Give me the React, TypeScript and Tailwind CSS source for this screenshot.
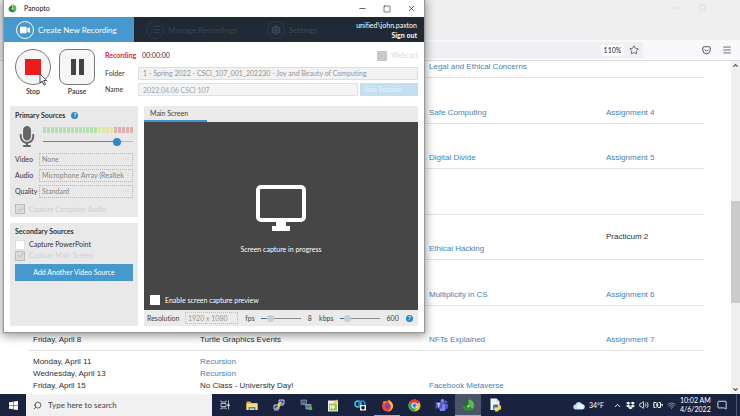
import { useState, type ReactNode } from 'react';
import {
  BatteryCharging,
  Check,
  ChevronDown,
  ChevronUp,
  List,
  Menu,
  MessageSquare,
  Minus,
  Search,
  Settings,
  Square,
  Star,
  Volume2,
  Wifi,
  X,
} from 'lucide-react';
import { FaDropbox, FaMicrophone, FaVideo } from 'react-icons/fa';

type Cell = { text: string; link?: boolean };

type ScheduleRow = {
  dates: Cell[];
  topics: Cell[];
  reading: Cell[];
  work: Cell[];
  height: string;
};

const link = (text: string): Cell => ({ text, link: true });
const plain = (text: string): Cell => ({ text });

const schedule: ScheduleRow[] = [
  { dates: [], topics: [], reading: [link('Legal and Ethical Concerns')], work: [], height: 'h-4' },
  { dates: [], topics: [], reading: [link('Safe Computing')], work: [link('Assignment 4')], height: 'h-[46px]' },
  { dates: [], topics: [], reading: [link('Digital Divide')], work: [link('Assignment 5')], height: 'h-[45px]' },
  { dates: [], topics: [], reading: [], work: [], height: 'h-[46px]' },
  { dates: [], topics: [], reading: [link('Ethical Hacking')], work: [plain('Practicum 2'), plain('\u00a0')], height: 'h-[45px]' },
  { dates: [], topics: [], reading: [link('Multiplicity in CS')], work: [link('Assignment 6')], height: 'h-[46px]' },
  {
    dates: [plain('Friday, April 8')],
    topics: [plain('Turtle Graphics Events')],
    reading: [link('NFTs Explained')],
    work: [link('Assignment 7')],
    height: 'h-[45px]',
  },
  {
    dates: [plain('Monday, April 11'), plain('Wednesday, April 13'), plain('Friday, April 15')],
    topics: [link('Recursion'), link('Recursion'), plain('No Class - University Day!')],
    reading: [link('Facebook Metaverse')],
    work: [],
    height: 'h-[46px]',
  },
];

function ScheduleCell({ items }: { items: Cell[] }) {
  return (
    <td className="px-[5px] pb-1 align-bottom">
      {items.map((item, i) => (
        <div key={i}>
          {item.link ? (
            <a href="#" className="text-[#4583b8]">
              {item.text}
            </a>
          ) : (
            item.text
          )}
        </div>
      ))}
    </td>
  );
}

function Browser() {
  return (
    <div className="flex min-h-0 flex-1 flex-col bg-white">
      <div className="flex h-10 items-start justify-end gap-[18px] bg-[#efeff0] px-2 pt-1 text-[#cfcfcf]">
        <button type="button" aria-label="Minimize browser"><Minus size={8} strokeWidth={1.5} /></button>
        <button type="button" aria-label="Restore browser"><Square size={7} strokeWidth={1.5} /></button>
        <button type="button" aria-label="Close browser"><X size={8} strokeWidth={1.5} className="text-[#e4e4e4]" /></button>
      </div>

      <div className="flex h-[21px] items-center border-b border-[#dcdce0] bg-[#f9f9fb] pr-2">
        <div className="flex h-4 flex-1 items-center justify-end gap-[5px] bg-[#f0f0f4] pr-1">
          <span className="flex h-[11px] w-[23px] items-center justify-center rounded-xs bg-white font-['Lato',sans-serif] text-[7px] text-[#222]">
            110%
          </span>
          <button type="button" aria-label="Bookmark this page">
            <Star size={10} strokeWidth={2} className="text-[#555]" />
          </button>
        </div>
        <div className="flex w-[89px] justify-end gap-[11px] text-[#555]">
          <button type="button" aria-label="Pocket">
            <svg width="9" height="9" viewBox="0 0 18 18" fill="none" stroke="currentColor" strokeWidth="2">
              <path d="M1.5 3.5a2 2 0 0 1 2-2h11a2 2 0 0 1 2 2V8a7.5 7.5 0 0 1-15 0z" />
              <path d="M5.5 7 9 10.5 12.5 7" />
            </svg>
          </button>
          <button type="button" aria-label="Open menu"><Menu size={10} strokeWidth={2} /></button>
        </div>
      </div>

      <div className="flex min-h-0 flex-1">
        <div className="min-w-0 flex-1 overflow-hidden pr-[27px] pl-7">
          <table className="w-full table-fixed border-collapse text-[8px] leading-3 text-[#2f2f2f]">
            <colgroup>
              <col className="w-[167px]" />
              <col className="w-[229px]" />
              <col className="w-[177px]" />
              <col />
            </colgroup>
            <tbody>
              {schedule.map((row, i) => (
                <tr key={i} className={`border-b border-[#e2e2e2] ${row.height}`}>
                  <ScheduleCell items={row.dates} />
                  <ScheduleCell items={row.topics} />
                  <ScheduleCell items={row.reading} />
                  <ScheduleCell items={row.work} />
                </tr>
              ))}
            </tbody>
          </table>
        </div>
        <div className="flex w-[9px] flex-col items-center bg-[#f0f0f0] py-px text-[#444]">
          <ChevronUp size={7} strokeWidth={3.5} />
          <div className="flex w-full flex-1 flex-col">
            <div className="flex-[131]" />
            <div className="flex-[102] bg-[#cbcbcb]" />
            <div className="flex-[82]" />
          </div>
          <ChevronDown size={7} strokeWidth={3.5} />
        </div>
      </div>
    </div>
  );
}

function PanoptoLogo({ size }: { size: number }) {
  return (
    <svg width={size} height={size} viewBox="0 0 24 24">
      <path d="M1 12c0 7 7 12 15 9l5-3-9-5z" fill="#2c8f3d" />
      <path d="M12 1c9 0 13 9 9 16l-2 1-7-6z" fill="#57b947" />
      <path d="M11 1 1 11l9 3z" fill="#1f6e33" />
      <path d="M9 12h5l-2 4z" fill="#d7efd2" />
    </svg>
  );
}

function HelpDot() {
  return (
    <button
      type="button"
      aria-label="Help"
      className="flex size-[7px] items-center justify-center rounded-full bg-[#2f86c1] text-[6px] leading-none font-bold text-white"
    >
      ?
    </button>
  );
}

function TitleBar() {
  return (
    <div className="flex h-[17px] items-center bg-white pr-2 pl-1">
      <PanoptoLogo size={9} />
      <span className="ml-[7px] flex-1 text-[7px] text-[#111]">Panopto</span>
      <div className="flex items-center gap-4 text-[#333]">
        <button type="button" aria-label="Minimize"><Minus size={9} strokeWidth={2} /></button>
        <button type="button" aria-label="Maximize"><Square size={8} strokeWidth={2} /></button>
        <button type="button" aria-label="Close"><X size={9} strokeWidth={2} /></button>
      </div>
    </div>
  );
}

function NavBar() {
  return (
    <nav className="flex h-[25px] bg-[#202a35] text-[8px] whitespace-nowrap">
      <button type="button" className="flex w-[130px] items-center gap-1 bg-[#4798cd] pl-3 text-white">
        <span className="flex size-[18px] shrink-0 items-center justify-center rounded-full border border-white">
          <FaVideo size={10} />
        </span>
        Create New Recording
      </button>
      <button type="button" disabled className="flex w-[121px] items-center gap-1 pl-3 text-[#3a444f]">
        <span className="flex size-[18px] shrink-0 items-center justify-center rounded-full border border-[#2e3843]">
          <List size={11} />
        </span>
        Manage Recordings
      </button>
      <button type="button" disabled className="flex items-center gap-1 pl-3 text-[#3f4954]">
        <span className="flex size-[18px] shrink-0 items-center justify-center rounded-full border border-[#2e3843]">
          <Settings size={10} strokeWidth={3.5} />
        </span>
        Settings
      </button>
      <div className="ml-auto flex flex-col items-end justify-center pr-[7px] text-[7px] leading-[10px] text-white">
        <span>unified\john.paxton</span>
        <a href="#" className="font-bold">Sign out</a>
      </div>
    </nav>
  );
}

function RecordingHeader() {
  return (
    <div className="flex gap-2 text-[7px] text-[#333]">
      <button type="button" className="flex w-9 flex-col items-center font-semibold">
        <span className="flex size-9 items-center justify-center rounded-full border border-[#777] bg-[#f6f6f6]">
          <span className="size-4 bg-[#ef1c1c]" />
        </span>
        <span className="mt-px leading-[10px]">Stop</span>
      </button>
      <button type="button" className="flex w-9 flex-col items-center font-semibold">
        <span className="flex size-9 items-center justify-center gap-[3px] rounded-lg border border-[#777] bg-[#f6f6f6]">
          <span className="h-4 w-[5px] bg-[#444]" />
          <span className="h-4 w-[5px] bg-[#444]" />
        </span>
        <span className="mt-px leading-[10px]">Pause</span>
      </button>

      <div className="flex flex-1 flex-col gap-[3px] pl-[2px]">
        <div className="flex h-[13px] items-center">
          <span className="w-[37px] font-bold text-[#e0243a]">Recording</span>
          <span>00:00:00</span>
          <label className="ml-auto flex items-center gap-1 text-[#d8d8d8]">
            <input type="checkbox" disabled className="size-[10px] appearance-none bg-[#c8c8c8]" />
            Webcast
          </label>
        </div>
        <div className="mt-[2px] flex items-center">
          <label htmlFor="folder" className="w-[33px]">Folder</label>
          <select
            id="folder"
            disabled
            className="h-[13px] min-w-0 flex-1 appearance-none border border-[#dedede] bg-[#f2f2f2] pl-1 text-[#959595]"
          >
            <option>1 - Spring 2022 - CSCI_107_001_202230 - Joy and Beauty of Computing</option>
          </select>
        </div>
        <div className="flex items-center">
          <label htmlFor="name" className="w-[33px]">Name</label>
          <input
            id="name"
            disabled
            defaultValue="2022.04.06 CSCI 107"
            className="h-[13px] min-w-0 flex-1 border border-[#e2e2e2] bg-[#f4f4f4] pl-1 text-[#a3a3a3]"
          />
          <button type="button" disabled className="ml-[2px] h-[13px] w-[58px] bg-[#c3dff0] pr-3 text-[#e9f4fb]">
            Join Session
          </button>
        </div>
      </div>
    </div>
  );
}

// 23 bars: green, then yellow, then the red end of the scale
const levelBars = Array.from({ length: 23 }, (_, i) =>
  i < 14 ? 'bg-[#b3deae]' : i < 18 ? 'bg-[#dfe6b0]' : 'bg-[#dfb0b0]'
);

function SourceSelect({ id, label, value }: { id: string; label: string; value: string }) {
  return (
    <div className="flex items-center">
      <label htmlFor={id} className="w-6 shrink-0">{label}</label>
      <div className="grid min-w-0 flex-1 items-center">
        <select
          id={id}
          disabled
          className="col-start-1 row-start-1 h-[13px] w-full appearance-none border border-dotted border-[#b5b5b5] pl-[2px] text-[#858585]"
        >
          <option>{value}</option>
        </select>
        <ChevronDown size={5} className="col-start-1 row-start-1 mr-[3px] justify-self-end text-[#bdbdbd]" />
      </div>
    </div>
  );
}

function PrimarySources() {
  const [volume, setVolume] = useState(85);

  return (
    <section className="flex h-[111px] flex-col bg-[#e9e9e9] px-[5px] pt-1 text-[7px] text-[#333]">
      <h2 className="flex h-[10px] items-center gap-[6px] font-bold">
        Primary Sources
        <HelpDot />
      </h2>
      <div className="mt-1 flex h-6 items-center gap-1">
        <FaMicrophone size={21} className="w-6 text-[#666]" />
        <div className="flex flex-1 flex-col gap-[5px]">
          <div className="flex h-[6px] gap-px">
            {levelBars.map((color, i) => (
              <span key={i} className={`flex-1 ${color}`} />
            ))}
          </div>
          <input
            type="range"
            aria-label="Microphone volume"
            value={volume}
            onChange={(e) => setVolume(Number(e.target.value))}
            className="h-2 w-full appearance-none bg-[linear-gradient(to_right,#3d8fc6_82%,#bdbdbd_82%)] bg-[length:100%_1px] bg-center bg-no-repeat [&::-webkit-slider-thumb]:size-2 [&::-webkit-slider-thumb]:appearance-none [&::-webkit-slider-thumb]:rounded-full [&::-webkit-slider-thumb]:bg-[#3089c4]"
          />
        </div>
      </div>
      <div className="mt-[5px] flex flex-col gap-[3px]">
        <SourceSelect id="video" label="Video" value="None" />
        <SourceSelect id="audio" label="Audio" value="Microphone Array (Realtek" />
        <SourceSelect id="quality" label="Quality" value="Standard" />
      </div>
      <label className="mt-[6px] flex items-center gap-1 text-[#cfcfcf]">
        <span className="grid place-items-center">
          <input type="checkbox" disabled defaultChecked className="col-start-1 row-start-1 size-[10px] appearance-none border border-[#bcbcbc] bg-[#dcdcdc]" />
          <Check size={7} strokeWidth={3} className="col-start-1 row-start-1 text-[#aaa]" />
        </span>
        Capture Computer Audio
      </label>
    </section>
  );
}

function SecondarySources() {
  return (
    <section className="flex flex-1 flex-col bg-[#e9e9e9] px-[5px] pt-[3px] text-[7px] text-[#333]">
      <h2 className="h-[10px] leading-[10px] font-bold">Secondary Sources</h2>
      <label className="mt-[3px] flex h-[11px] items-center gap-1">
        <input type="checkbox" className="size-[10px] appearance-none border border-[#ddd] bg-white" />
        Capture PowerPoint
      </label>
      <label className="flex h-[11px] items-center gap-1 text-[#d0d0d0]">
        <span className="grid place-items-center">
          <input type="checkbox" disabled defaultChecked className="col-start-1 row-start-1 size-[10px] appearance-none border border-[#bcbcbc] bg-[#dcdcdc]" />
          <Check size={7} strokeWidth={3} className="col-start-1 row-start-1 text-[#aaa]" />
        </span>
        Capture Main Screen
      </label>
      <button type="button" className="mt-[3px] h-[17px] bg-[#4798cd] text-[7px] text-white">
        Add Another Video Source
      </button>
    </section>
  );
}

function QualitySlider({ id, label, value, display }: { id: string; label: string; value: number; display: string }) {
  return (
    <div className="flex items-center">
      <label htmlFor={id}>{label}</label>
      <input
        id={id}
        type="range"
        disabled
        value={value}
        readOnly
        className="mr-[7px] ml-[6px] h-2 w-10 appearance-none bg-[linear-gradient(to_right,#3b7391_12%,#8b8b8b_12%)] bg-[length:100%_1px] bg-center bg-no-repeat [&::-webkit-slider-thumb]:h-[7px] [&::-webkit-slider-thumb]:w-[7px] [&::-webkit-slider-thumb]:appearance-none [&::-webkit-slider-thumb]:rounded-full [&::-webkit-slider-thumb]:bg-[#c3d0d8]"
      />
      <span>{display}</span>
    </div>
  );
}

function Preview() {
  return (
    <section className="flex flex-1 flex-col text-[7px]">
      <div className="flex h-4 bg-[#ebebeb]">
        <button type="button" className="w-[63px] border-b-2 border-[#4390c6] pl-[6px] text-left text-[#444]">
          Main Screen
        </button>
      </div>
      <div className="flex flex-1 flex-col items-center bg-[#464646] text-white">
        <svg width="50" height="46" viewBox="0 0 50 46" className="mt-[63px]">
          <rect x="2" y="2" width="46" height="33" rx="3" fill="none" stroke="white" strokeWidth="4" />
          <path d="M20 36h10v5h4v5H16v-5h4z" fill="white" />
        </svg>
        <p className="mt-[13px] leading-[10px]">Screen capture in progress</p>
        <label className="mt-auto mb-[5px] flex w-full items-center gap-[5px] pl-[6px]">
          <input type="checkbox" className="size-[10px] appearance-none bg-white" />
          Enable screen capture preview
        </label>
      </div>
      <div className="flex h-4 items-center justify-between bg-[#ebebeb] pr-[5px] pl-[3px] text-[#444]">
        <div className="flex items-center">
          <label htmlFor="resolution" className="w-[38px]">Resolution</label>
          <select
            id="resolution"
            disabled
            className="h-3 w-[53px] appearance-none border border-dotted border-[#bdbdbd] pl-[2px] text-[#999]"
          >
            <option>1920 x 1080</option>
          </select>
        </div>
        <QualitySlider id="fps" label="fps" value={18} display="8" />
        <QualitySlider id="kbps" label="kbps" value={13} display="600" />
        <HelpDot />
      </div>
    </section>
  );
}

function PanoptoWindow() {
  return (
    <div className="absolute top-0 left-1 flex h-[332px] w-[420px] flex-col bg-white font-['Lato','Open_Sans',sans-serif] shadow-[0_0_1px_1px_#9a9a9a,0_2px_9px_2px_rgba(0,0,0,0.4)] [font-variant-ligatures:none]">
      <TitleBar />
      <NavBar />
      <div className="flex flex-1 flex-col gap-[10px] px-[6px] pt-[7px] pb-[6px]">
        <div className="h-[47px] pl-[5px]">
          <RecordingHeader />
        </div>
        <div className="flex flex-1 gap-[6px]">
          <div className="flex w-32 flex-col gap-[6px]">
            <PrimarySources />
            <SecondarySources />
          </div>
          <Preview />
        </div>
      </div>
      <svg width="9" height="13" viewBox="0 0 9 13" className="absolute top-[73px] left-[35px]">
        <path d="M1 1v9l2-2 2 4 1.500-.7L4.700 7.500h3z" fill="white" stroke="#222" strokeWidth="0.800" />
      </svg>
    </div>
  );
}

function TaskItem({ label, open, active, children }: { label: string; open?: boolean; active?: boolean; children: ReactNode }) {
  return (
    <button
      type="button"
      aria-label={label}
      className={`flex h-full w-[26px] items-center justify-center border-y ${
        active ? 'border-t-transparent border-b-[#76b9ed] bg-[#4a5568]' : open ? 'border-t-transparent border-b-[#76b9ed]' : 'border-transparent'
      }`}
    >
      {children}
    </button>
  );
}

function Taskbar() {
  return (
    <div className="flex h-[22px] items-center bg-[#19233f] font-['Lato','Open_Sans',sans-serif] text-white">
      <button type="button" aria-label="Start" className="flex h-full w-[26px] items-center justify-center">
        <svg width="9" height="9" viewBox="0 0 18 18" fill="white">
          <path d="M0 2.500 8 1.400V8.500H0zM9 1.200 18 0v8.500H9zM0 9.500h8v7.100L0 15.500zM9 9.500h9V18L9 16.800z" />
        </svg>
      </button>
      <label className="flex h-full w-[186px] items-center gap-[6px] bg-[#f1f1f1] pl-[7px] text-[#333]">
        <Search size={9} strokeWidth={2} className="-scale-x-100" />
        <input
          aria-label="Search"
          placeholder="Type here to search"
          className="min-w-0 flex-1 text-[8px] outline-none placeholder:text-[#444]"
        />
      </label>

      <div className="flex h-full gap-[1px] overflow-hidden">
        <TaskItem label="Task View">
          <svg width="10" height="10" viewBox="0 0 20 20" fill="none" stroke="#d8dce4" strokeWidth="1.600">
            <path d="M2 1v3h10V1M2 19v-3h10v3M2 7h10v6H2zM17 1v18" />
            <path d="M15.500 9h3v3h-3z" fill="#d8dce4" />
          </svg>
        </TaskItem>
        <TaskItem label="File Explorer">
          <svg width="12" height="11" viewBox="0 0 24 22">
            <path d="M1 3h8l2 3h12v14H1z" fill="#d9a63a" />
            <path d="M1 7h22v13H1z" fill="#fbdc7c" />
            <path d="M5 14h14v6h-3v-3H8v3H5z" fill="#3e92d6" />
          </svg>
        </TaskItem>
        <TaskItem label="PuTTY">
          <svg width="12" height="12" viewBox="0 0 24 24">
            <path d="M12 2h10v8H12zM2 12h10v8H2z" fill="#2b45b8" stroke="#c4c8ce" strokeWidth="2" />
            <path d="M11 22h-9M22 12H13" stroke="#b6bac0" strokeWidth="2" />
            <path d="m17 6-7 5 4 2-7 6" fill="none" stroke="#f8df3a" strokeWidth="2.500" />
          </svg>
        </TaskItem>
        <TaskItem label="WinSCP">
          <svg width="13" height="12" viewBox="0 0 26 24">
            <path d="M2 2h11v9H2z" fill="#415a78" stroke="#8797aa" strokeWidth="1.500" />
            <path d="M12 11h10v9H12z" fill="#6d7682" stroke="#a9b1bb" strokeWidth="1.500" />
            <path d="m6 8 8 7" stroke="#4d8bd1" strokeWidth="3" />
            <circle cx="21" cy="19" r="3.500" fill="#3ec43e" />
          </svg>
        </TaskItem>
        <TaskItem label="Notepad++">
          <svg width="12" height="13" viewBox="0 0 24 26">
            <path d="M2 3h20v22H2z" fill="#eef5e6" />
            <path d="M4 9h16v14H4z" fill="#9bc94b" />
            <path d="M7 12v8M7 16h9M12 12v8" stroke="#fff" strokeWidth="2" />
            <path d="m12 9 7-8 3 3-7 8z" fill="#e6c454" />
          </svg>
        </TaskItem>
        <TaskItem label="Webex">
          <svg width="13" height="12" viewBox="0 0 26 24">
            <circle cx="8" cy="10" r="6" fill="none" stroke="#35c7ee" strokeWidth="3" />
            <circle cx="16" cy="10" r="6" fill="none" stroke="#2586d8" strokeWidth="3" />
            <path d="M12 12h12v11H12z" fill="#f2f2f2" />
            <circle cx="18" cy="17.500" r="3.500" fill="#111" />
          </svg>
        </TaskItem>
        <TaskItem label="Firefox" open>
          <svg width="13" height="13" viewBox="0 0 26 26">
            <circle cx="13" cy="14" r="11" fill="#f4442e" />
            <path d="M15 1c4 3 9 7 9 13a11 11 0 0 1-11 11c6-2 8-6 7-11-1-4-6-6-5-13z" fill="#ffc62e" />
            <path d="M3 7c2-2 4-3 7-2l-3 4z" fill="#ff9524" />
            <circle cx="13" cy="14.500" r="5" fill="#7442c8" />
          </svg>
        </TaskItem>
        <TaskItem label="Chrome">
          <svg width="13" height="13" viewBox="0 0 26 26">
            <circle cx="13" cy="13" r="12" fill="#fbc116" />
            <path d="M13 13 2.600 7a12 12 0 0 1 20.800 0z" fill="#e33b2e" />
            <path d="M13 13 2.600 7A12 12 0 0 0 12 25l6-9z" fill="#2da94f" />
            <circle cx="13" cy="13" r="6" fill="white" />
            <circle cx="13" cy="13" r="4.500" fill="#4285f4" />
          </svg>
        </TaskItem>
        <TaskItem label="Teams">
          <svg width="13" height="12" viewBox="0 0 26 24">
            <circle cx="15" cy="4" r="4" fill="#7b83eb" />
            <circle cx="22" cy="6" r="3" fill="#5059c9" />
            <path d="M9 9h12v8a6 6 0 0 1-12 4z" fill="#7b83eb" />
            <path d="M20 10h6v6a4 4 0 0 1-5 4z" fill="#5059c9" />
            <rect x="1" y="6" width="13" height="13" rx="1" fill="#4b53bc" />
            <path d="M4.500 9.500h6M7.500 9.500v7" stroke="white" strokeWidth="2" />
          </svg>
        </TaskItem>
        <TaskItem label="Panopto" open active>
          <PanoptoLogo size={13} />
        </TaskItem>
        <TaskItem label="Python IDLE">
          <svg width="13" height="14" viewBox="0 0 26 28">
            <path d="M3 1h12l6 6v17H3z" fill="#f1f3f5" />
            <path d="M15 1v6h6z" fill="#bfc6cc" />
            <path d="M10 13h8v6h-7v4H8v-8z" fill="#3f78ac" />
            <path d="M18 15h6v8h-5v4h-7v-6h6z" fill="#f5d548" />
          </svg>
        </TaskItem>
      </div>

      <div className="ml-auto flex items-center gap-1 pr-[3px] text-[7px]">
        <svg width="12" height="9" viewBox="0 0 24 18">
          <path d="M6 17a5 5 0 0 1-1-10 7 7 0 0 1 13-1 5.500 5.500 0 0 1 0 11z" fill="#b9defa" />
          <path d="M9 15a5 5 0 0 1 1-8 6 6 0 0 1 8 1 4 4 0 0 1 0 8z" fill="#e9f5ff" />
        </svg>
        <span className="w-5">34°F</span>
        <ChevronUp size={9} strokeWidth={2.500} />
        <FaDropbox size={9} />
        <Volume2 size={10} strokeWidth={2} />
        <BatteryCharging size={10} strokeWidth={2.500} />
        <Wifi size={9} strokeWidth={2} className="text-[#aab0bd]" />
        <div className="w-7 text-center leading-[9px] whitespace-nowrap">
          <div>10:02 AM</div>
          <div>4/6/2022</div>
        </div>
        <button
          type="button"
          aria-label="Notifications"
          className="ml-[5px] flex h-[22px] w-5 items-center border-r border-[#4c556d]"
        >
          <MessageSquare size={10} strokeWidth={2} className="-scale-x-100" />
        </button>
      </div>
    </div>
  );
}

export default function App() {
  return (
    <div className="relative flex h-screen flex-col overflow-hidden font-['Liberation_Sans',Arial,sans-serif]">
      <Browser />
      <Taskbar />
      <PanoptoWindow />
    </div>
  );
}
